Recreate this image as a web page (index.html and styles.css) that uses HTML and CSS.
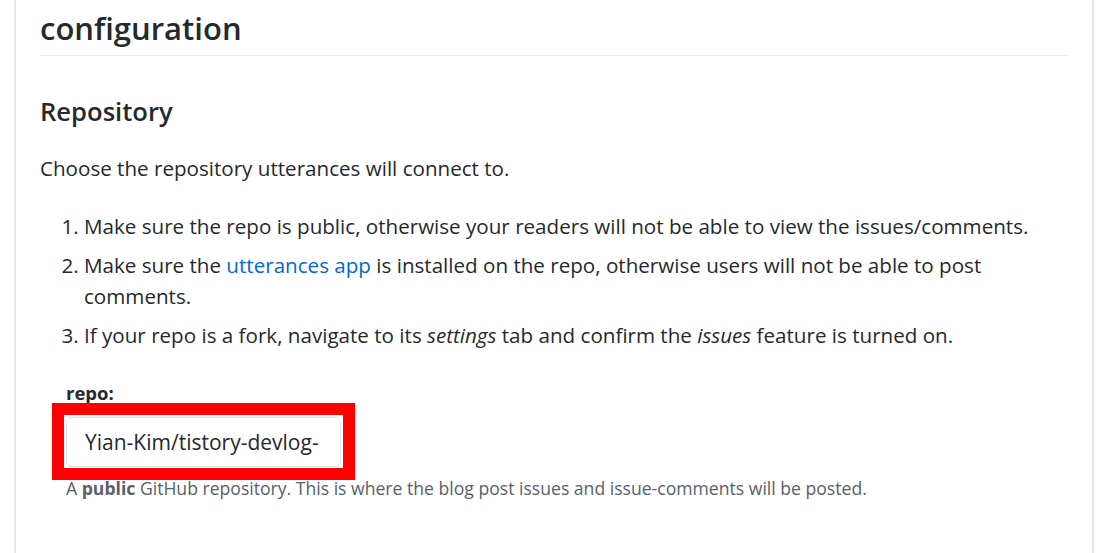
FILE: index.html
```html
<!DOCTYPE html>
<html>
<head>
    <title>utterances configuration</title>
    <link rel="stylesheet" href="styles.css">
</head>
<body>
    <div class="page">
        <h2 class="title">configuration</h2>

        <h3 class="section-title">Repository</h3>
        <p class="intro">Choose the repository utterances will connect to.</p>

        <ol class="steps">
            <li>Make sure the repo is public, otherwise your readers will not be able to view the issues/comments.</li>
            <li>Make sure the <a href="#">utterances app</a> is installed on the repo, otherwise users will not be able to post comments.</li>
            <li>If your repo is a fork, navigate to its <em>settings</em> tab and confirm the <em>issues</em> feature is turned on.</li>
        </ol>

        <div class="form-group">
            <label class="field-label" for="repo">repo:</label>
            <div class="field">
                <input id="repo" class="repo-input" type="text" value="Yian-Kim/tistory-devlog-">
                <div class="highlight"></div>
            </div>
            <p class="note">A <strong>public</strong> GitHub repository. This is where the blog post issues and issue-comments will be posted.</p>
        </div>
    </div>
</body>
</html>
```

FILE: styles.css
```css
body {
    margin: 0;
    background-color: #fff;
    font-family: "Open Sans", "Noto Sans", Arial, sans-serif;
    color: #24292e;
    overflow: hidden;
}

.page {
    margin-left: 14px;
    width: 1080px;
    min-height: 553px;
    padding: 8px 24px 0 24px;
    box-sizing: border-box;
    border-left: 2px solid #e4e6ea;
    border-right: 2px solid #e4e6ea;
}

.title {
    margin: 0;
    font-size: 31px;
    line-height: 40px;
    font-weight: 600;
    padding-bottom: 7px;
    border-bottom: 1px solid #eaecef;
}

.section-title {
    margin: 40px 0 0 0;
    font-size: 25.6px;
    line-height: 32px;
    font-weight: 600;
}

.intro {
    margin: 25px 0 0 0;
    font-size: 20.6px;
    line-height: 31px;
}

.steps {
    margin: 27px 0 0 0;
    padding-left: 44px;
    font-size: 20.6px;
    line-height: 31px;
}

.steps li + li {
    margin-top: 8px;
}

.steps a {
    color: #0366d6;
    text-decoration: none;
}

.form-group {
    margin-top: 30px;
    padding-left: 26px;
}

.field-label {
    display: block;
    font-size: 18.5px;
    line-height: 24px;
    font-weight: 700;
}

.field {
    position: relative;
    width: 275px;
    margin-top: 12px;
}

.repo-input {
    display: block;
    width: 100%;
    height: 50px;
    box-sizing: border-box;
    padding: 0 18px;
    border: 1px solid #e1e4e8;
    border-radius: 6px;
    font-family: inherit;
    font-size: 21px;
    color: #24292e;
    background-color: #fff;
}

/* red annotation frame drawn over the input */
.highlight {
    position: absolute;
    top: -14px;
    left: -14px;
    right: -14px;
    bottom: -13px;
    border: 12px solid #ff0000;
    pointer-events: none;
}

.note {
    margin: 10px 0 0 0;
    font-size: 17.6px;
    line-height: 22px;
    color: #586069;
}

.note strong {
    font-weight: 700;
}
```
